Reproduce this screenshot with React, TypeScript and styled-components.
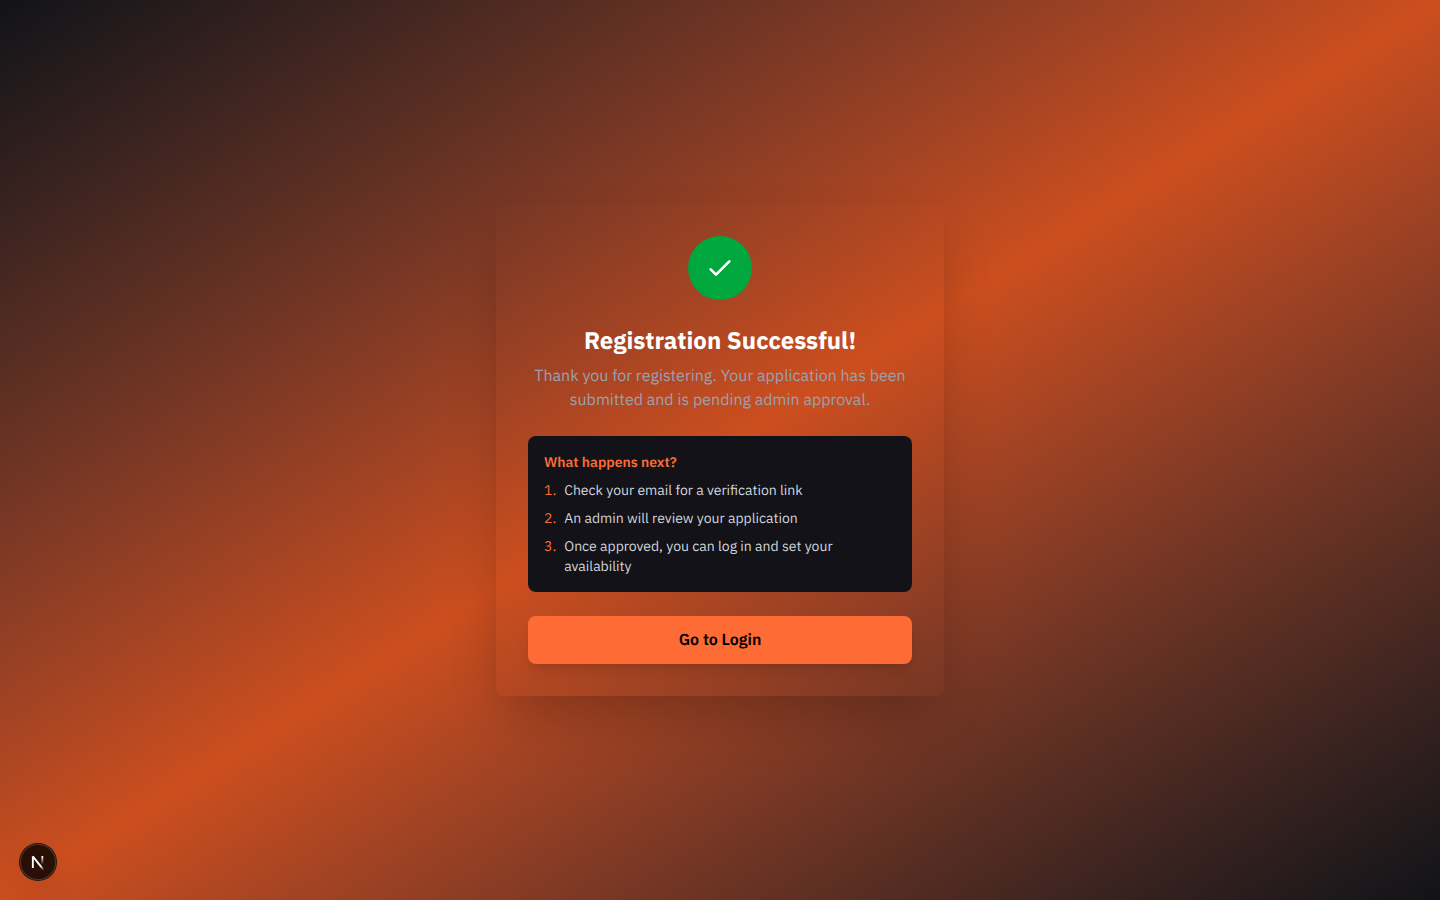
import React from "react";
import styled, { createGlobalStyle } from "styled-components";

const GlobalStyle = createGlobalStyle`
  *, *::before, *::after { box-sizing: border-box; }
  body {
    margin: 0;
    background: #111318;
    font-family: "IBM Plex Sans", Roboto, "Liberation Sans", sans-serif;
    text-rendering: geometricPrecision;
  }
  h1, h2, p, ol { margin: 0; padding: 0; }
`;

const Page = styled.main`
  min-height: 100vh;
  display: flex;
  align-items: center;
  justify-content: center;
  padding: 16px;
  background: linear-gradient(to bottom right in oklab, #111318, #cc4e1e, #111318);
`;

const Card = styled.section`
  width: 100%;
  max-width: 448px;
  display: flex;
  flex-direction: column;
  align-items: center;
  gap: 24px;
  padding: 32px;
  border-radius: 8px;
  box-shadow: 0 25px 50px -12px rgba(0, 0, 0, 0.25);
`;

const SuccessBadge = styled.div`
  width: 64px;
  height: 64px;
  display: grid;
  place-items: center;
  border-radius: 50%;
  background: #00a63e;
  color: #fff;
`;

const Intro = styled.header`
  display: flex;
  flex-direction: column;
  gap: 8px;
  text-align: center;
`;

const Title = styled.h1`
  color: #fff;
  font-size: 24px;
  font-weight: 700;
  line-height: 32px;
`;

const Message = styled.p`
  color: #99a1af;
  font-size: 16px;
  line-height: 24px;
`;

const NextSteps = styled.section`
  width: 100%;
  padding: 16px;
  border-radius: 8px;
  background: #131218;
  font-size: 14px;
  line-height: 20px;
`;

const StepsTitle = styled.h2`
  margin-bottom: 8px;
  color: #ff6b35;
  font-size: 14px;
  font-weight: 600;
  line-height: 20px;
`;

const StepList = styled.ol`
  display: flex;
  flex-direction: column;
  gap: 8px;
  list-style: none;
`;

const Step = styled.li`
  display: flex;
  gap: 8px;
  color: #d1d5dc;
`;

const StepNumber = styled.span`
  color: #ff6b35;
`;

const LoginButton = styled.button`
  width: 100%;
  padding: 12px 16px;
  border: 0;
  border-radius: 8px;
  background: #ff6b35;
  color: #000;
  font-family: inherit;
  font-size: 16px;
  font-weight: 600;
  line-height: 24px;
  text-rendering: inherit;
  cursor: pointer;
  box-shadow: 0 10px 15px -3px rgba(0, 0, 0, 0.1), 0 4px 6px -4px rgba(0, 0, 0, 0.1);
`;

const DevButton = styled.button`
  position: fixed;
  left: 20px;
  bottom: 20px;
  width: 36px;
  height: 36px;
  display: grid;
  place-items: center;
  padding: 0;
  border: 0;
  border-radius: 50%;
  background: rgba(0, 0, 0, 0.8);
  box-shadow: 0 0 0 1px #171717, inset 0 0 0 1px rgba(255, 255, 255, 0.14),
    0 16px 32px -8px rgba(0, 0, 0, 0.24);
  cursor: pointer;
`;

const steps = [
  "Check your email for a verification link",
  "An admin will review your application",
  "Once approved, you can log in and set your availability",
];

function CheckIcon() {
  return (
    <svg width="32" height="32" viewBox="0 0 24 24" fill="none" aria-hidden="true">
      <path d="M5 13l4 4L19 7" stroke="currentColor" strokeWidth="2" strokeLinecap="round" strokeLinejoin="round" />
    </svg>
  );
}

function NextLogo() {
  return (
    <svg width="36" height="36" viewBox="0 0 36 36" fill="none" aria-hidden="true">
      <defs>
        <linearGradient id="slash" x1="9.96" y1="11.12" x2="15.48" y2="17.97" gradientUnits="userSpaceOnUse">
          <stop stopColor="#fff" />
          <stop offset="0.6" stopColor="#fff" stopOpacity="0" />
          <stop offset="1" stopColor="#fff" stopOpacity="0" />
        </linearGradient>
        <linearGradient id="stem" x1="11.82" y1="1.4" x2="11.79" y2="9.63" gradientUnits="userSpaceOnUse">
          <stop stopColor="#fff" />
          <stop offset="1" stopColor="#fff" stopOpacity="0" />
        </linearGradient>
      </defs>
      <g transform="translate(10.5 11)" strokeWidth="1.86" strokeLinejoin="bevel">
        <path d="M13.3 15.2L2.34 1.4V12.9" stroke="url(#slash)" />
        <path d="M11.82 1V13.1" stroke="url(#stem)" />
      </g>
    </svg>
  );
}

export default function App() {
  return (
    <>
      <GlobalStyle />
      <Page>
        <Card>
          <SuccessBadge>
            <CheckIcon />
          </SuccessBadge>
          <Intro>
            <Title>Registration Successful!</Title>
            <Message>
              Thank you for registering. Your application has been submitted and is pending admin approval.
            </Message>
          </Intro>
          <NextSteps>
            <StepsTitle>What happens next?</StepsTitle>
            <StepList>
              {steps.map((text, index) => (
                <Step key={text}>
                  <StepNumber>{index + 1}.</StepNumber>
                  <span>{text}</span>
                </Step>
              ))}
            </StepList>
          </NextSteps>
          <LoginButton type="button">Go to Login</LoginButton>
        </Card>
      </Page>
      <DevButton type="button" aria-label="Open Next.js Dev Tools">
        <NextLogo />
      </DevButton>
    </>
  );
}
